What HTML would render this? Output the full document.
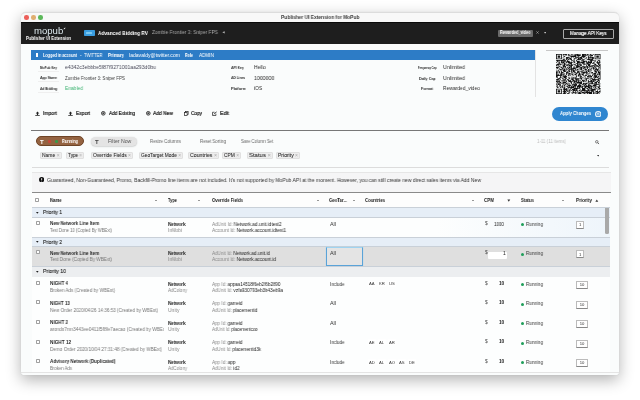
<!DOCTYPE html><html><head><meta charset='utf-8'><style>
*{margin:0;padding:0;box-sizing:border-box}
html,body{width:640px;height:400px;overflow:hidden;background:#fff;font-family:"Liberation Sans",sans-serif;}
.a{position:absolute;white-space:nowrap;line-height:1;will-change:transform}
</style></head><body>
<div class="a" style="left:20.5px;top:12px;width:598.3px;height:362.5px;border-radius:5px 5px 2px 2px;background:#fafcfc;box-shadow:0 5px 15px rgba(0,0,0,0.3),0 0 0.8px rgba(0,0,0,0.25);"></div>
<div class="a" style="left:20.5px;top:12px;width:598.3px;height:10.5px;border-radius:5px 5px 0 0;background:#f8f8f8;border-top:0.6px solid #dcdcdc"></div>
<div class="a" style="left:23.9px;top:15px;width:4.5px;height:4.5px;border-radius:50%;background:#ec5f5a"></div>
<div class="a" style="left:30.6px;top:15px;width:4.5px;height:4.5px;border-radius:50%;background:#dfae70"></div>
<div class="a" style="left:37.9px;top:15px;width:4.5px;height:4.5px;border-radius:50%;background:#5cb85a"></div>
<div class="a" id="t1" style="left:280.75px;top:14.8px;font-size:5px;font-weight:bold;color:#3a3a3a;transform:scaleX(0.9744);transform-origin:0 0;">Publisher UI Extension for MoPub</div>
<div class="a" style="left:20.5px;top:22px;width:598.3px;height:22px;background:#1e1e1e;border-top:0.7px solid #0a0a0a"></div>
<div class="a" id="t2" style="left:33.75px;top:26.5px;font-size:8.5px;color:#dde9ee;;transform:scaleX(1.1250);transform-origin:0 0;">mopub</div>
<svg class="a" style="left:63px;top:26.5px" width="2.6" height="2.6" viewBox="0 0 10 10" preserveAspectRatio="none"><path d="M1 9L9 1L8 8Z" fill="#fff"/></svg>
<div class="a" id="t3" style="left:26px;top:36.6px;font-size:4.8px;font-weight:bold;color:#fff;transform:scaleX(0.8612);transform-origin:0 0;">Publisher UI Extension</div>
<div class="a" style="left:83.85px;top:29.85px;width:11.35px;height:6.25px;background:#3a9de0;border-radius:0.8px"></div>
<div class="a" style="left:86.3px;top:32px;width:6px;height:2.2px;background:#7cc8f0;border-radius:0.5px;filter:blur(0.3px)"></div>
<div class="a" id="t4" style="left:98px;top:30.2px;font-size:6px;font-weight:bold;color:#fff;transform:scaleX(0.7990);transform-origin:0 0;">Advanced Bidding RV</div>
<div class="a" id="t5" style="left:152px;top:30.4px;font-size:5.6px;color:#aaa;transform:scaleX(0.8700);transform-origin:0 0;">Zombie Frontier 3: Sniper FPS</div>
<svg class="a" style="left:222.3px;top:31.2px" width="3" height="2.6" viewBox="0 0 10 10" preserveAspectRatio="none"><path d="M1 5L9 0.5V9.5Z" fill="#bbb"/></svg>
<div class="a" style="left:497.7px;top:29.7px;width:34.6px;height:6.9px;background:#6a6a6a;border-radius:1px"></div>
<div class="a" id="t6" style="left:499.5px;top:31px;font-size:4.8px;font-weight:bold;color:#fff;transform:scaleX(0.8000);transform-origin:0 0;">Rewarded_video</div>
<svg class="a" style="left:536.3px;top:31.2px" width="3" height="3" viewBox="0 0 10 10" preserveAspectRatio="none"><path d="M1 1L9 9M9 1L1 9" stroke="#bbb" stroke-width="1.8"/></svg>
<svg class="a" style="left:544px;top:32.2px" width="2.2" height="1.8" viewBox="0 0 10 8" preserveAspectRatio="none"><path d="M0 0H10L5 8Z" fill="#bbb"/></svg>
<div class="a" style="left:563.2px;top:28.5px;width:50.8px;height:9.8px;border:0.8px solid #aaa;border-radius:1px"></div>
<div class="a" id="t7" style="left:570px;top:30.6px;font-size:5.6px;color:#fff;-webkit-text-stroke:0.15px #fff;transform:scaleX(0.8208);transform-origin:0 0;">Manage API Keys</div>
<div class="a" style="left:31px;top:50px;width:504px;height:10px;background:#2d7cc6"></div>
<div class="a" style="left:35.5px;top:53px;width:2px;height:4px;background:#fff"></div>
<div class="a" id="t8" style="left:43px;top:52.5px;font-size:5px;font-weight:bold;color:#fff;transform:scaleX(0.7649);transform-origin:0 0;">Logged in account</div>
<div class="a" style="left:80px;top:52.5px;font-size:5px;color:#fff">-</div>
<div class="a" id="t9" style="left:83.5px;top:52.5px;font-size:5px;color:#fff;transform:scaleX(0.8326);transform-origin:0 0;">TWITTER</div>
<div class="a" id="t10" style="left:108px;top:52.5px;font-size:5px;font-weight:bold;color:#fff;transform:scaleX(0.8591);transform-origin:0 0;">Primary</div>
<div class="a" id="t11" style="left:128.6px;top:52.5px;font-size:5px;color:#fff;transform:scaleX(1.0178);transform-origin:0 0;">ladavaldy@twitter.com</div>
<div class="a" id="t12" style="left:185px;top:52.5px;font-size:5px;font-weight:bold;color:#fff;transform:scaleX(0.7378);transform-origin:0 0;">Role</div>
<div class="a" id="t13" style="left:199px;top:52.5px;font-size:5px;color:#fff;transform:scaleX(0.9302);transform-origin:0 0;">ADMIN</div>
<div class="a" style="left:535px;top:50px;width:0.8px;height:47px;background:#e3e3e3"></div>
<div class="a" style="left:546px;top:49.5px;width:62px;height:1px;background:#c8c8c8"></div>
<div class="a" id="t14" style="left:40px;top:65.7px;font-size:4px;font-weight:bold;color:#2a2a2a;transform:scaleX(0.7805);transform-origin:0 0;">MoPub Key</div>
<div class="a" style="left:38px;top:70.5px;width:21px;height:0.5px;background:#efefef"></div>
<div class="a" id="t15" style="left:65px;top:64.3px;font-size:6.2px;color:#4a4a5a;transform:scaleX(0.8289);transform-origin:0 0;">e4342c3ebbbe5f87f9271001aa293d0bu</div>
<div class="a" id="t16" style="left:40px;top:76.2px;font-size:4px;font-weight:bold;color:#2a2a2a;transform:scaleX(0.8594);transform-origin:0 0;">App Name</div>
<div class="a" style="left:38px;top:81.0px;width:21px;height:0.5px;background:#efefef"></div>
<div class="a" id="t17" style="left:65px;top:74.8px;font-size:6.2px;color:#3a3a3a;transform:scaleX(0.7151);transform-origin:0 0;">Zombie Frontier 3: Sniper FPS</div>
<div class="a" id="t18" style="left:40px;top:86.7px;font-size:4px;font-weight:bold;color:#2a2a2a;transform:scaleX(0.7971);transform-origin:0 0;">Ad Bidding</div>
<div class="a" style="left:38px;top:91.5px;width:21px;height:0.5px;background:#efefef"></div>
<div class="a" id="t19" style="left:65px;top:85.3px;font-size:6.2px;color:#3cb371;transform:scaleX(0.7923);transform-origin:0 0;">Enabled</div>
<div class="a" id="t20" style="left:230.9px;top:65.7px;font-size:4px;font-weight:bold;color:#2a2a2a;transform:scaleX(0.8397);transform-origin:0 0;">API Key</div>
<div class="a" id="t21" style="left:254.2px;top:64.3px;font-size:6.2px;color:#2a2a2a;transform:scaleX(0.8292);transform-origin:0 0;">Hello</div>
<div class="a" id="t22" style="left:230.9px;top:76.2px;font-size:4px;font-weight:bold;color:#2a2a2a;transform:scaleX(0.8187);transform-origin:0 0;">AD Lines</div>
<div class="a" id="t23" style="left:254.2px;top:74.8px;font-size:6.2px;color:#2a2a2a;transform:scaleX(0.8425);transform-origin:0 0;">1000000</div>
<div class="a" id="t24" style="left:230.9px;top:86.7px;font-size:4px;font-weight:bold;color:#2a2a2a;transform:scaleX(0.9055);transform-origin:0 0;">Platform</div>
<div class="a" id="t25" style="left:254.2px;top:85.3px;font-size:6.2px;color:#2a2a2a;transform:scaleX(0.7746);transform-origin:0 0;">iOS</div>
<div class="a" id="t26" style="left:417.75px;top:66.2px;font-size:4px;font-weight:bold;color:#2a2a2a;transform:scaleX(0.6400);transform-origin:0 0;">Frequency Cap</div>
<div class="a" id="t27" style="left:443px;top:64.3px;font-size:6.2px;color:#2a2a2a;transform:scaleX(0.8528);transform-origin:0 0;">Unlimited</div>
<div class="a" id="t28" style="left:418.75px;top:76.7px;font-size:4px;font-weight:bold;color:#2a2a2a;transform:scaleX(0.9049);transform-origin:0 0;">Daily Cap</div>
<div class="a" id="t29" style="left:443px;top:74.8px;font-size:6.2px;color:#2a2a2a;transform:scaleX(0.8528);transform-origin:0 0;">Unlimited</div>
<div class="a" id="t30" style="left:421.0px;top:87.2px;font-size:4px;font-weight:bold;color:#2a2a2a;transform:scaleX(0.8848);transform-origin:0 0;">Format</div>
<div class="a" id="t31" style="left:443px;top:85.3px;font-size:6.2px;color:#2a2a2a;transform:scaleX(0.7968);transform-origin:0 0;">Rewarded_video</div>
<svg class="a" style="left:555.5px;top:53.5px" width="44.5" height="40" viewBox="0 0 53 53" preserveAspectRatio="none"><path d="M0 0h7v1h-7zM8 0h5v1h-5zM14 0h2v1h-2zM18 0h2v1h-2zM21 0h1v1h-1zM23 0h4v1h-4zM28 0h1v1h-1zM31 0h5v1h-5zM37 0h2v1h-2zM40 0h2v1h-2zM44 0h1v1h-1zM46 0h7v1h-7zM0 1h1v1h-1zM6 1h1v1h-1zM8 1h1v1h-1zM11 1h2v1h-2zM15 1h1v1h-1zM17 1h1v1h-1zM22 1h2v1h-2zM25 1h5v1h-5zM31 1h3v1h-3zM35 1h3v1h-3zM41 1h3v1h-3zM46 1h1v1h-1zM52 1h1v1h-1zM0 2h1v1h-1zM2 2h3v1h-3zM6 2h1v1h-1zM9 2h1v1h-1zM14 2h3v1h-3zM18 2h11v1h-11zM31 2h5v1h-5zM38 2h6v1h-6zM46 2h1v1h-1zM48 2h3v1h-3zM52 2h1v1h-1zM0 3h1v1h-1zM2 3h3v1h-3zM6 3h1v1h-1zM9 3h2v1h-2zM17 3h7v1h-7zM26 3h1v1h-1zM30 3h5v1h-5zM38 3h1v1h-1zM41 3h1v1h-1zM46 3h1v1h-1zM48 3h3v1h-3zM52 3h1v1h-1zM0 4h1v1h-1zM2 4h3v1h-3zM6 4h1v1h-1zM8 4h1v1h-1zM12 4h4v1h-4zM18 4h1v1h-1zM20 4h1v1h-1zM23 4h4v1h-4zM28 4h3v1h-3zM32 4h2v1h-2zM36 4h1v1h-1zM38 4h7v1h-7zM46 4h1v1h-1zM48 4h3v1h-3zM52 4h1v1h-1zM0 5h1v1h-1zM6 5h1v1h-1zM10 5h1v1h-1zM12 5h2v1h-2zM15 5h3v1h-3zM22 5h2v1h-2zM26 5h6v1h-6zM35 5h1v1h-1zM38 5h1v1h-1zM41 5h1v1h-1zM43 5h2v1h-2zM46 5h1v1h-1zM52 5h1v1h-1zM0 6h7v1h-7zM8 6h1v1h-1zM12 6h3v1h-3zM16 6h3v1h-3zM21 6h2v1h-2zM24 6h1v1h-1zM26 6h2v1h-2zM29 6h2v1h-2zM34 6h1v1h-1zM36 6h1v1h-1zM38 6h3v1h-3zM42 6h3v1h-3zM46 6h7v1h-7zM8 7h3v1h-3zM12 7h1v1h-1zM14 7h2v1h-2zM17 7h2v1h-2zM21 7h1v1h-1zM25 7h5v1h-5zM31 7h3v1h-3zM37 7h7v1h-7zM0 8h12v1h-12zM13 8h1v1h-1zM18 8h2v1h-2zM21 8h1v1h-1zM24 8h1v1h-1zM30 8h3v1h-3zM40 8h5v1h-5zM46 8h1v1h-1zM50 8h2v1h-2zM1 9h2v1h-2zM4 9h1v1h-1zM6 9h3v1h-3zM10 9h1v1h-1zM13 9h3v1h-3zM20 9h3v1h-3zM24 9h5v1h-5zM32 9h5v1h-5zM38 9h1v1h-1zM41 9h2v1h-2zM45 9h3v1h-3zM49 9h1v1h-1zM51 9h2v1h-2zM1 10h1v1h-1zM3 10h1v1h-1zM6 10h1v1h-1zM8 10h9v1h-9zM18 10h1v1h-1zM21 10h1v1h-1zM25 10h3v1h-3zM30 10h5v1h-5zM36 10h1v1h-1zM38 10h5v1h-5zM49 10h1v1h-1zM51 10h1v1h-1zM0 11h1v1h-1zM3 11h2v1h-2zM6 11h4v1h-4zM12 11h1v1h-1zM14 11h6v1h-6zM21 11h2v1h-2zM25 11h9v1h-9zM36 11h7v1h-7zM44 11h2v1h-2zM48 11h5v1h-5zM3 12h2v1h-2zM7 12h1v1h-1zM9 12h2v1h-2zM15 12h4v1h-4zM24 12h3v1h-3zM28 12h1v1h-1zM31 12h3v1h-3zM36 12h3v1h-3zM40 12h2v1h-2zM43 12h3v1h-3zM49 12h3v1h-3zM1 13h3v1h-3zM5 13h2v1h-2zM9 13h4v1h-4zM14 13h1v1h-1zM17 13h2v1h-2zM20 13h1v1h-1zM22 13h2v1h-2zM25 13h1v1h-1zM27 13h4v1h-4zM33 13h3v1h-3zM37 13h4v1h-4zM46 13h2v1h-2zM50 13h1v1h-1zM52 13h1v1h-1zM0 14h6v1h-6zM7 14h1v1h-1zM9 14h2v1h-2zM13 14h4v1h-4zM18 14h2v1h-2zM21 14h2v1h-2zM25 14h3v1h-3zM29 14h1v1h-1zM32 14h2v1h-2zM36 14h1v1h-1zM38 14h3v1h-3zM45 14h3v1h-3zM50 14h3v1h-3zM0 15h1v1h-1zM2 15h1v1h-1zM8 15h3v1h-3zM12 15h2v1h-2zM15 15h5v1h-5zM23 15h4v1h-4zM28 15h3v1h-3zM36 15h1v1h-1zM38 15h3v1h-3zM42 15h4v1h-4zM47 15h3v1h-3zM51 15h2v1h-2zM3 16h2v1h-2zM8 16h4v1h-4zM15 16h1v1h-1zM17 16h2v1h-2zM21 16h1v1h-1zM24 16h5v1h-5zM31 16h3v1h-3zM35 16h3v1h-3zM39 16h5v1h-5zM45 16h2v1h-2zM48 16h3v1h-3zM52 16h1v1h-1zM0 17h3v1h-3zM5 17h2v1h-2zM8 17h2v1h-2zM11 17h1v1h-1zM13 17h1v1h-1zM15 17h4v1h-4zM21 17h1v1h-1zM23 17h5v1h-5zM29 17h2v1h-2zM33 17h2v1h-2zM37 17h2v1h-2zM40 17h1v1h-1zM44 17h1v1h-1zM46 17h2v1h-2zM50 17h3v1h-3zM0 18h4v1h-4zM6 18h2v1h-2zM9 18h1v1h-1zM11 18h1v1h-1zM13 18h1v1h-1zM15 18h2v1h-2zM18 18h1v1h-1zM20 18h3v1h-3zM24 18h2v1h-2zM28 18h10v1h-10zM39 18h1v1h-1zM42 18h4v1h-4zM47 18h1v1h-1zM52 18h1v1h-1zM1 19h1v1h-1zM4 19h1v1h-1zM7 19h2v1h-2zM10 19h1v1h-1zM12 19h1v1h-1zM14 19h2v1h-2zM17 19h7v1h-7zM27 19h1v1h-1zM29 19h2v1h-2zM32 19h1v1h-1zM34 19h1v1h-1zM37 19h1v1h-1zM40 19h1v1h-1zM42 19h1v1h-1zM44 19h2v1h-2zM47 19h2v1h-2zM50 19h1v1h-1zM52 19h1v1h-1zM4 20h4v1h-4zM9 20h2v1h-2zM12 20h2v1h-2zM15 20h6v1h-6zM23 20h1v1h-1zM25 20h2v1h-2zM28 20h3v1h-3zM34 20h3v1h-3zM38 20h2v1h-2zM41 20h1v1h-1zM44 20h1v1h-1zM46 20h5v1h-5zM52 20h1v1h-1zM0 21h1v1h-1zM2 21h2v1h-2zM5 21h1v1h-1zM8 21h4v1h-4zM15 21h1v1h-1zM18 21h1v1h-1zM20 21h6v1h-6zM30 21h3v1h-3zM34 21h2v1h-2zM38 21h1v1h-1zM40 21h3v1h-3zM46 21h1v1h-1zM48 21h2v1h-2zM2 22h1v1h-1zM6 22h1v1h-1zM8 22h3v1h-3zM12 22h1v1h-1zM14 22h3v1h-3zM18 22h4v1h-4zM26 22h1v1h-1zM28 22h1v1h-1zM32 22h1v1h-1zM36 22h4v1h-4zM45 22h3v1h-3zM49 22h4v1h-4zM0 23h2v1h-2zM3 23h2v1h-2zM6 23h1v1h-1zM9 23h3v1h-3zM13 23h1v1h-1zM15 23h2v1h-2zM18 23h1v1h-1zM20 23h3v1h-3zM25 23h3v1h-3zM29 23h3v1h-3zM33 23h1v1h-1zM35 23h2v1h-2zM38 23h2v1h-2zM41 23h1v1h-1zM46 23h3v1h-3zM50 23h1v1h-1zM52 23h1v1h-1zM0 24h2v1h-2zM3 24h2v1h-2zM6 24h3v1h-3zM12 24h3v1h-3zM18 24h2v1h-2zM21 24h3v1h-3zM25 24h3v1h-3zM30 24h8v1h-8zM40 24h1v1h-1zM42 24h2v1h-2zM47 24h2v1h-2zM50 24h3v1h-3zM0 25h2v1h-2zM4 25h1v1h-1zM6 25h2v1h-2zM9 25h1v1h-1zM12 25h2v1h-2zM15 25h2v1h-2zM24 25h2v1h-2zM27 25h2v1h-2zM32 25h3v1h-3zM36 25h1v1h-1zM39 25h1v1h-1zM42 25h2v1h-2zM45 25h3v1h-3zM50 25h3v1h-3zM0 26h1v1h-1zM2 26h1v1h-1zM5 26h2v1h-2zM8 26h1v1h-1zM10 26h1v1h-1zM12 26h1v1h-1zM14 26h7v1h-7zM22 26h3v1h-3zM27 26h2v1h-2zM30 26h3v1h-3zM36 26h3v1h-3zM40 26h1v1h-1zM44 26h4v1h-4zM49 26h1v1h-1zM51 26h2v1h-2zM0 27h4v1h-4zM5 27h5v1h-5zM12 27h1v1h-1zM15 27h1v1h-1zM19 27h1v1h-1zM22 27h2v1h-2zM26 27h4v1h-4zM31 27h2v1h-2zM35 27h1v1h-1zM43 27h1v1h-1zM45 27h1v1h-1zM47 27h1v1h-1zM49 27h4v1h-4zM0 28h7v1h-7zM8 28h1v1h-1zM10 28h2v1h-2zM14 28h2v1h-2zM17 28h1v1h-1zM20 28h1v1h-1zM24 28h1v1h-1zM26 28h2v1h-2zM29 28h1v1h-1zM32 28h1v1h-1zM34 28h3v1h-3zM38 28h4v1h-4zM43 28h1v1h-1zM45 28h4v1h-4zM52 28h1v1h-1zM0 29h2v1h-2zM5 29h1v1h-1zM8 29h5v1h-5zM24 29h1v1h-1zM26 29h1v1h-1zM28 29h3v1h-3zM34 29h1v1h-1zM37 29h6v1h-6zM45 29h4v1h-4zM50 29h1v1h-1zM52 29h1v1h-1zM0 30h2v1h-2zM5 30h3v1h-3zM9 30h4v1h-4zM14 30h1v1h-1zM16 30h1v1h-1zM18 30h2v1h-2zM21 30h1v1h-1zM23 30h2v1h-2zM29 30h1v1h-1zM32 30h1v1h-1zM34 30h1v1h-1zM37 30h2v1h-2zM41 30h2v1h-2zM44 30h1v1h-1zM46 30h5v1h-5zM52 30h1v1h-1zM1 31h1v1h-1zM4 31h2v1h-2zM9 31h3v1h-3zM15 31h1v1h-1zM20 31h2v1h-2zM23 31h1v1h-1zM28 31h4v1h-4zM35 31h1v1h-1zM39 31h2v1h-2zM45 31h3v1h-3zM49 31h1v1h-1zM52 31h1v1h-1zM2 32h3v1h-3zM7 32h2v1h-2zM11 32h2v1h-2zM15 32h2v1h-2zM18 32h3v1h-3zM22 32h6v1h-6zM29 32h2v1h-2zM33 32h1v1h-1zM35 32h4v1h-4zM41 32h3v1h-3zM45 32h1v1h-1zM50 32h3v1h-3zM0 33h4v1h-4zM5 33h1v1h-1zM8 33h1v1h-1zM10 33h2v1h-2zM13 33h2v1h-2zM18 33h3v1h-3zM23 33h4v1h-4zM30 33h1v1h-1zM35 33h2v1h-2zM40 33h1v1h-1zM43 33h8v1h-8zM52 33h1v1h-1zM1 34h2v1h-2zM4 34h1v1h-1zM8 34h3v1h-3zM14 34h2v1h-2zM17 34h1v1h-1zM19 34h3v1h-3zM23 34h2v1h-2zM26 34h4v1h-4zM31 34h4v1h-4zM36 34h1v1h-1zM38 34h1v1h-1zM41 34h6v1h-6zM50 34h2v1h-2zM0 35h1v1h-1zM2 35h1v1h-1zM4 35h1v1h-1zM6 35h3v1h-3zM10 35h3v1h-3zM14 35h4v1h-4zM20 35h3v1h-3zM24 35h3v1h-3zM31 35h2v1h-2zM34 35h1v1h-1zM36 35h1v1h-1zM38 35h1v1h-1zM41 35h2v1h-2zM44 35h1v1h-1zM46 35h2v1h-2zM49 35h3v1h-3zM0 36h5v1h-5zM8 36h1v1h-1zM10 36h1v1h-1zM12 36h1v1h-1zM15 36h5v1h-5zM21 36h4v1h-4zM26 36h2v1h-2zM29 36h2v1h-2zM32 36h2v1h-2zM35 36h1v1h-1zM38 36h8v1h-8zM48 36h2v1h-2zM51 36h1v1h-1zM1 37h2v1h-2zM4 37h2v1h-2zM8 37h4v1h-4zM17 37h2v1h-2zM21 37h2v1h-2zM24 37h7v1h-7zM38 37h1v1h-1zM40 37h1v1h-1zM42 37h2v1h-2zM46 37h3v1h-3zM50 37h2v1h-2zM0 38h1v1h-1zM3 38h13v1h-13zM18 38h1v1h-1zM20 38h1v1h-1zM22 38h2v1h-2zM25 38h6v1h-6zM32 38h2v1h-2zM35 38h4v1h-4zM40 38h1v1h-1zM42 38h2v1h-2zM45 38h4v1h-4zM50 38h2v1h-2zM1 39h3v1h-3zM8 39h1v1h-1zM12 39h1v1h-1zM16 39h1v1h-1zM18 39h1v1h-1zM21 39h1v1h-1zM23 39h2v1h-2zM28 39h3v1h-3zM32 39h5v1h-5zM39 39h6v1h-6zM46 39h1v1h-1zM48 39h1v1h-1zM52 39h1v1h-1zM0 40h1v1h-1zM2 40h4v1h-4zM8 40h1v1h-1zM10 40h2v1h-2zM13 40h2v1h-2zM16 40h1v1h-1zM19 40h6v1h-6zM27 40h2v1h-2zM31 40h2v1h-2zM34 40h2v1h-2zM38 40h2v1h-2zM45 40h7v1h-7zM1 41h1v1h-1zM4 41h2v1h-2zM7 41h1v1h-1zM9 41h2v1h-2zM14 41h4v1h-4zM19 41h1v1h-1zM21 41h4v1h-4zM26 41h4v1h-4zM33 41h2v1h-2zM36 41h1v1h-1zM38 41h4v1h-4zM44 41h4v1h-4zM51 41h1v1h-1zM0 42h2v1h-2zM4 42h1v1h-1zM7 42h1v1h-1zM10 42h1v1h-1zM12 42h2v1h-2zM15 42h2v1h-2zM18 42h1v1h-1zM20 42h4v1h-4zM25 42h8v1h-8zM34 42h6v1h-6zM41 42h8v1h-8zM51 42h2v1h-2zM1 43h1v1h-1zM3 43h1v1h-1zM5 43h4v1h-4zM10 43h1v1h-1zM13 43h2v1h-2zM16 43h1v1h-1zM18 43h4v1h-4zM23 43h1v1h-1zM25 43h5v1h-5zM31 43h1v1h-1zM33 43h10v1h-10zM46 43h1v1h-1zM49 43h3v1h-3zM1 44h2v1h-2zM5 44h1v1h-1zM7 44h1v1h-1zM9 44h2v1h-2zM14 44h8v1h-8zM23 44h1v1h-1zM25 44h1v1h-1zM27 44h2v1h-2zM30 44h2v1h-2zM34 44h2v1h-2zM38 44h3v1h-3zM42 44h1v1h-1zM44 44h1v1h-1zM46 44h2v1h-2zM50 44h2v1h-2zM9 45h2v1h-2zM12 45h1v1h-1zM14 45h1v1h-1zM17 45h2v1h-2zM21 45h8v1h-8zM31 45h4v1h-4zM36 45h2v1h-2zM39 45h4v1h-4zM46 45h1v1h-1zM48 45h1v1h-1zM51 45h2v1h-2zM0 46h7v1h-7zM8 46h6v1h-6zM16 46h1v1h-1zM19 46h7v1h-7zM31 46h4v1h-4zM37 46h2v1h-2zM42 46h6v1h-6zM49 46h4v1h-4zM0 47h1v1h-1zM6 47h1v1h-1zM9 47h4v1h-4zM14 47h1v1h-1zM16 47h2v1h-2zM19 47h4v1h-4zM24 47h1v1h-1zM28 47h2v1h-2zM31 47h4v1h-4zM38 47h9v1h-9zM0 48h1v1h-1zM2 48h3v1h-3zM6 48h1v1h-1zM9 48h2v1h-2zM12 48h2v1h-2zM15 48h2v1h-2zM18 48h1v1h-1zM20 48h6v1h-6zM27 48h2v1h-2zM30 48h10v1h-10zM41 48h4v1h-4zM46 48h1v1h-1zM49 48h1v1h-1zM52 48h1v1h-1zM0 49h1v1h-1zM2 49h3v1h-3zM6 49h1v1h-1zM8 49h4v1h-4zM13 49h2v1h-2zM16 49h1v1h-1zM20 49h1v1h-1zM23 49h1v1h-1zM25 49h1v1h-1zM29 49h2v1h-2zM34 49h1v1h-1zM36 49h2v1h-2zM39 49h1v1h-1zM42 49h3v1h-3zM47 49h3v1h-3zM51 49h2v1h-2zM0 50h1v1h-1zM2 50h3v1h-3zM6 50h1v1h-1zM9 50h4v1h-4zM15 50h2v1h-2zM19 50h3v1h-3zM23 50h1v1h-1zM26 50h3v1h-3zM31 50h12v1h-12zM44 50h2v1h-2zM47 50h6v1h-6zM0 51h1v1h-1zM6 51h1v1h-1zM9 51h2v1h-2zM15 51h1v1h-1zM18 51h1v1h-1zM20 51h6v1h-6zM27 51h7v1h-7zM35 51h8v1h-8zM44 51h1v1h-1zM46 51h1v1h-1zM49 51h2v1h-2zM0 52h7v1h-7zM8 52h4v1h-4zM13 52h3v1h-3zM19 52h1v1h-1zM23 52h1v1h-1zM26 52h4v1h-4zM33 52h2v1h-2zM37 52h1v1h-1zM39 52h4v1h-4zM44 52h2v1h-2zM47 52h3v1h-3zM51 52h1v1h-1z" fill="#111"/></svg>
<div class="a" style="left:552px;top:107px;width:56px;height:13.5px;background:#2f86d0;border-radius:7px"></div>
<div class="a" id="t32" style="left:560px;top:111px;font-size:5.4px;font-weight:bold;color:#fff;transform:scaleX(0.7898);transform-origin:0 0;">Apply Changes</div>
<svg class="a" style="left:595.3px;top:110.6px" width="6.4" height="6.4" viewBox="0 0 10 10" preserveAspectRatio="none"><circle cx="5" cy="5" r="5" fill="#e8f2fa"/><rect x="2.6" y="2.8" width="4.8" height="4.4" rx="0.6" fill="none" stroke="#2f86d0" stroke-width="1.2"/><path d="M3.8 5L4.8 6L6.4 4" fill="none" stroke="#2f86d0" stroke-width="1"/></svg>
<svg class="a" style="left:34.75px;top:110.8px" width="5" height="5" viewBox="0 0 10 10" preserveAspectRatio="none"><path d="M5 1 L8.5 4.8 H6.2 V8 H3.8 V4.8 H1.5 Z M0.5 8.6 H9.5 V10 H0.5 Z" fill="#222"/></svg>
<svg class="a" style="left:68px;top:110.8px" width="5" height="5" viewBox="0 0 10 10" preserveAspectRatio="none"><path d="M5 1 L8.5 4.8 H6.2 V8 H3.8 V4.8 H1.5 Z M0.5 8.6 H9.5 V10 H0.5 Z" fill="#222"/></svg>
<svg class="a" style="left:101px;top:110.9px" width="4.6" height="4.6" viewBox="0 0 10 10" preserveAspectRatio="none"><circle cx="5" cy="5" r="4" fill="none" stroke="#111" stroke-width="1.7"/><path d="M5 2.6V7.4M2.6 5H7.4" stroke="#111" stroke-width="1.5"/></svg>
<svg class="a" style="left:146.3px;top:110.9px" width="4.6" height="4.6" viewBox="0 0 10 10" preserveAspectRatio="none"><circle cx="5" cy="5" r="4" fill="none" stroke="#111" stroke-width="1.7"/><path d="M5 2.6V7.4M2.6 5H7.4" stroke="#111" stroke-width="1.5"/></svg>
<svg class="a" style="left:184px;top:110.8px" width="4.6" height="4.8" viewBox="0 0 10 10" preserveAspectRatio="none"><rect x="3.2" y="0.8" width="5.8" height="6.4" fill="#fff" stroke="#222" stroke-width="1.5"/><rect x="1" y="3" width="5.8" height="6.4" fill="#fff" stroke="#222" stroke-width="1.5"/></svg>
<svg class="a" style="left:212.2px;top:110.6px" width="5.2" height="5" viewBox="0 0 10 10" preserveAspectRatio="none"><path d="M1 2.5H5M1 2.5V9H7.5V5.5" fill="none" stroke="#222" stroke-width="1.4"/><path d="M4 6.5L9 1.2" stroke="#222" stroke-width="1.8"/></svg>
<div class="a" id="t33" style="left:43px;top:110.6px;font-size:5.6px;color:#1a1a1a;-webkit-text-stroke:0.2px #1a1a1a;transform:scaleX(0.8828);transform-origin:0 0;">Import</div>
<div class="a" id="t34" style="left:75.75px;top:110.6px;font-size:5.6px;color:#1a1a1a;-webkit-text-stroke:0.2px #1a1a1a;transform:scaleX(0.8812);transform-origin:0 0;">Export</div>
<div class="a" id="t35" style="left:109px;top:110.6px;font-size:5.6px;color:#1a1a1a;-webkit-text-stroke:0.2px #1a1a1a;transform:scaleX(0.8362);transform-origin:0 0;">Add Existing</div>
<div class="a" id="t36" style="left:153.4px;top:110.6px;font-size:5.6px;color:#1a1a1a;-webkit-text-stroke:0.2px #1a1a1a;transform:scaleX(0.8765);transform-origin:0 0;">Add New</div>
<div class="a" id="t37" style="left:191px;top:110.6px;font-size:5.6px;color:#1a1a1a;-webkit-text-stroke:0.2px #1a1a1a;transform:scaleX(0.8421);transform-origin:0 0;">Copy</div>
<div class="a" id="t38" style="left:220px;top:110.6px;font-size:5.6px;color:#1a1a1a;-webkit-text-stroke:0.2px #1a1a1a;transform:scaleX(0.9335);transform-origin:0 0;">Edit</div>
<div class="a" style="left:31px;top:130px;width:577.5px;height:1px;background:#777"></div>
<div class="a" style="left:36.3px;top:136.4px;width:47.8px;height:9.8px;background:#946341;border:0.7px solid #6e4426;border-radius:5px"></div>
<div class="a" style="left:40px;top:138.5px;font-size:6px;font-weight:bold;color:#fff">T</div>
<div class="a" style="left:47.6px;top:139.8px;width:2.6px;height:2.6px;background:#c8473a;border-radius:50%"></div>
<div class="a" style="left:55.3px;top:139.8px;width:2.6px;height:2.6px;background:#3a9a4a;border-radius:50%"></div>
<div class="a" id="t39" style="left:62px;top:139.2px;font-size:5.2px;font-weight:bold;color:#fff;transform:scaleX(0.7608);transform-origin:0 0;">Running</div>
<div class="a" style="left:91.2px;top:136.7px;width:46.3px;height:9px;background:#e4e4e4;border-radius:5px;box-shadow:0 0.5px 1.5px rgba(0,0,0,0.25)"></div>
<div class="a" style="left:94.5px;top:138.5px;font-size:6px;font-weight:bold;color:#444">T</div>
<div class="a" id="t40" style="left:108px;top:139.2px;font-size:5.2px;color:#555;transform:scaleX(0.9846);transform-origin:0 0;">Filter Now</div>
<div class="a" id="t41" style="left:150px;top:140.4px;font-size:4.8px;color:#666;transform:scaleX(0.8873);transform-origin:0 0;">Resize Columns</div>
<div class="a" id="t42" style="left:200px;top:140.4px;font-size:4.8px;color:#666;transform:scaleX(0.8946);transform-origin:0 0;">Reset Sorting</div>
<div class="a" id="t43" style="left:241px;top:140.4px;font-size:4.8px;color:#666;transform:scaleX(0.8573);transform-origin:0 0;">Save Column Set</div>
<div class="a" id="t44" style="left:537px;top:140.4px;font-size:4.8px;color:#bbb;transform:scaleX(0.9193);transform-origin:0 0;">1-11 (11 items)</div>
<svg class="a" style="left:595px;top:139.5px" width="4.5" height="4.5" viewBox="0 0 10 10" preserveAspectRatio="none"><circle cx="4" cy="4" r="2.8" fill="none" stroke="#444" stroke-width="1.5"/><path d="M6 6L9 9" stroke="#444" stroke-width="1.8"/></svg>
<svg class="a" style="left:596.5px;top:154.6px" width="2.4" height="1.6" viewBox="0 0 10 8" preserveAspectRatio="none"><path d="M0 0H10L5 8Z" fill="#333"/></svg>
<div class="a" style="left:40px;top:152.2px;width:21.6px;height:7px;background:#ededed;border:0.5px solid #e0e0e0;border-radius:1px"></div>
<div class="a" id="t45" style="left:42px;top:154px;font-size:4.8px;color:#2a2a2a;-webkit-text-stroke:0.06px #2a2a2a;transform:scaleX(1.0382);transform-origin:0 0;">Name <span style='color:#aaa;-webkit-text-stroke:0'>×</span></div>
<div class="a" style="left:66px;top:152.2px;width:18px;height:7px;background:#ededed;border:0.5px solid #e0e0e0;border-radius:1px"></div>
<div class="a" id="t46" style="left:68px;top:154px;font-size:4.8px;color:#2a2a2a;-webkit-text-stroke:0.06px #2a2a2a;transform:scaleX(0.9624);transform-origin:0 0;">Type <span style='color:#aaa;-webkit-text-stroke:0'>×</span></div>
<div class="a" style="left:91px;top:152.2px;width:42px;height:7px;background:#ededed;border:0.5px solid #e0e0e0;border-radius:1px"></div>
<div class="a" id="t47" style="left:93px;top:154px;font-size:4.8px;color:#2a2a2a;-webkit-text-stroke:0.06px #2a2a2a;transform:scaleX(1.0362);transform-origin:0 0;">Override Fields <span style='color:#aaa;-webkit-text-stroke:0'>×</span></div>
<div class="a" style="left:139px;top:152.2px;width:44px;height:7px;background:#ededed;border:0.5px solid #e0e0e0;border-radius:1px"></div>
<div class="a" id="t48" style="left:141px;top:154px;font-size:4.8px;color:#2a2a2a;-webkit-text-stroke:0.06px #2a2a2a;transform:scaleX(1.0027);transform-origin:0 0;">GeoTarget Mode <span style='color:#aaa;-webkit-text-stroke:0'>×</span></div>
<div class="a" style="left:188px;top:152.2px;width:31px;height:7px;background:#ededed;border:0.5px solid #e0e0e0;border-radius:1px"></div>
<div class="a" id="t49" style="left:190px;top:154px;font-size:4.8px;color:#2a2a2a;-webkit-text-stroke:0.06px #2a2a2a;transform:scaleX(1.0937);transform-origin:0 0;">Countries <span style='color:#aaa;-webkit-text-stroke:0'>×</span></div>
<div class="a" style="left:222px;top:152.2px;width:19px;height:7px;background:#ededed;border:0.5px solid #e0e0e0;border-radius:1px"></div>
<div class="a" id="t50" style="left:224px;top:154px;font-size:4.8px;color:#2a2a2a;-webkit-text-stroke:0.06px #2a2a2a;transform:scaleX(1.0127);transform-origin:0 0;">CPM <span style='color:#aaa;-webkit-text-stroke:0'>×</span></div>
<div class="a" style="left:247px;top:152.2px;width:26px;height:7px;background:#ededed;border:0.5px solid #e0e0e0;border-radius:1px"></div>
<div class="a" id="t51" style="left:249px;top:154px;font-size:4.8px;color:#2a2a2a;-webkit-text-stroke:0.06px #2a2a2a;transform:scaleX(1.2394);transform-origin:0 0;">Status <span style='color:#aaa;-webkit-text-stroke:0'>×</span></div>
<div class="a" style="left:276px;top:152.2px;width:24px;height:7px;background:#ededed;border:0.5px solid #e0e0e0;border-radius:1px"></div>
<div class="a" id="t52" style="left:278px;top:154px;font-size:4.8px;color:#2a2a2a;-webkit-text-stroke:0.06px #2a2a2a;transform:scaleX(1.0483);transform-origin:0 0;">Priority <span style='color:#aaa;-webkit-text-stroke:0'>×</span></div>
<div class="a" style="left:31.5px;top:167px;width:577px;height:0.8px;background:#dcdcdc"></div>
<div class="a" style="left:31.5px;top:172px;width:578.5px;height:20px;background:#f5f5f6;border-top:0.6px solid #e6e6e6"></div>
<svg class="a" style="left:38.8px;top:177.3px" width="5.3" height="5.3" viewBox="0 0 10 10" preserveAspectRatio="none"><circle cx="5" cy="5" r="5" fill="#111"/><path d="M5 2.2V5.8" stroke="#fff" stroke-width="1.6"/><circle cx="5" cy="7.6" r="0.9" fill="#fff"/></svg>
<div class="a" id="t53" style="left:47px;top:178px;font-size:5.2px;color:#333;transform:scaleX(0.9683);transform-origin:0 0;">Guaranteed, Non-Guaranteed, Promo, Backfill-Promo line items are not included. It's not supported by MoPub API at the moment. However, you can still create new direct sales items via Add New</div>
<div class="a" style="left:0;top:0;width:640px;height:400px;clip-path:inset(12px 21.2px 27.5px 20.5px round 5px 5px 1px 1px)">
<div class="a" style="left:31.5px;top:192px;width:577.5px;height:15.5px;background:#fdfdfd"></div>
<div class="a" style="left:31.5px;top:191.6px;width:578.5px;height:1px;background:#8a8a8a"></div>
<div class="a" style="left:31.5px;top:207px;width:577.5px;height:0.8px;background:#c6ced8"></div>
<div class="a" style="left:35px;top:197.9px;width:4.4px;height:4.2px;border:0.6px solid #a0a0a0;border-radius:0.7px;background:#fff"></div>
<div class="a" id="t54" style="left:49.5px;top:198.2px;font-size:5.2px;font-weight:bold;color:#222;transform:scaleX(0.8133);transform-origin:0 0;">Name</div>
<div class="a" style="left:154.5px;top:200.3px;width:2.4px;height:0.5px;background:#999"></div>
<div class="a" id="t55" style="left:168px;top:198.2px;font-size:5.2px;font-weight:bold;color:#222;transform:scaleX(0.7670);transform-origin:0 0;">Type</div>
<div class="a" style="left:197.8px;top:200.3px;width:2.4px;height:0.5px;background:#999"></div>
<div class="a" id="t56" style="left:212px;top:198.2px;font-size:5.2px;font-weight:bold;color:#222;transform:scaleX(0.8205);transform-origin:0 0;">Override Fields</div>
<div class="a" style="left:316.8px;top:200.3px;width:2.4px;height:0.5px;background:#999"></div>
<div class="a" id="t57" style="left:329px;top:198.2px;font-size:5.2px;font-weight:bold;color:#222;transform:scaleX(0.8252);transform-origin:0 0;">GeoTar...</div>
<div class="a" style="left:352.8px;top:200.3px;width:2.4px;height:0.5px;background:#999"></div>
<div class="a" id="t58" style="left:364.7px;top:198.2px;font-size:5.2px;font-weight:bold;color:#222;transform:scaleX(0.8258);transform-origin:0 0;">Countries</div>
<div class="a" style="left:471.8px;top:200.3px;width:2.4px;height:0.5px;background:#999"></div>
<div class="a" id="t59" style="left:483.7px;top:198.2px;font-size:5.2px;font-weight:bold;color:#222;transform:scaleX(0.8672);transform-origin:0 0;">CPM</div>
<svg class="a" style="left:507.2px;top:198.6px" width="3.6" height="3" viewBox="0 0 10 8" preserveAspectRatio="none"><path d="M1 1H9L5 7Z" fill="#333"/></svg>
<div class="a" id="t60" style="left:520.5px;top:198.2px;font-size:5.2px;font-weight:bold;color:#222;transform:scaleX(0.8197);transform-origin:0 0;">Status</div>
<div class="a" style="left:562.3px;top:200.3px;width:2.4px;height:0.5px;background:#999"></div>
<div class="a" id="t61" style="left:575.5px;top:198.2px;font-size:5.2px;font-weight:bold;color:#222;transform:scaleX(0.8805);transform-origin:0 0;">Priority</div>
<svg class="a" style="left:594.7px;top:198.6px" width="3.6" height="3" viewBox="0 0 10 8" preserveAspectRatio="none"><path d="M1 7H9L5 1Z" fill="#333"/></svg>
<div class="a" style="left:31.5px;top:207.5px;width:577.5px;height:10.0px;background:#e6eef7"></div>
<div class="a" style="left:31.5px;top:216.8px;width:577.5px;height:0.7px;background:#c9d0d8"></div>
<div class="a" style="left:31.5px;top:207.2px;width:577.5px;height:0.7px;background:#c9d0d8"></div>
<svg class="a" style="left:35.6px;top:211.7px" width="2.6" height="1.8" viewBox="0 0 10 8" preserveAspectRatio="none"><path d="M0 0H10L5 8Z" fill="#222"/></svg>
<div class="a" id="t62" style="left:43px;top:210.3px;font-size:5.4px;color:#222;-webkit-text-stroke:0.1px #222;transform:scaleX(0.8928);transform-origin:0 0;">Priority 1</div>
<div class="a" style="left:31.5px;top:217.5px;width:577.5px;height:19.5px;background:linear-gradient(to right,#fdfefe 70%,#eef5fb)"></div>
<div class="a" style="left:36.3px;top:221.0px;width:4.1px;height:4.1px;border:0.6px solid #a0a0a0;border-radius:0.7px;background:#fff"></div>
<div class="a" id="t63" style="left:49.6px;top:222.20000000000002px;font-size:4.7px;font-weight:bold;color:#2a2a2a;transform:scaleX(0.9546);transform-origin:0 0;">New Network Line Item</div>
<div class="a" style="left:49.6px;top:228.10000000000002px;width:114px;height:7px;overflow:hidden">
<div class="a" id="t64" style="left:0px;top:0px;font-size:5px;color:#777;transform:scaleX(0.8387);transform-origin:0 0;">Test Done 10 (Copied By WBExt)</div>
</div>
<div class="a" id="t65" style="left:168px;top:221.8px;font-size:5px;font-weight:bold;color:#222;transform:scaleX(0.8868);transform-origin:0 0;">Network</div>
<div class="a" id="t66" style="left:168px;top:228.10000000000002px;font-size:5px;color:#888;transform:scaleX(0.9324);transform-origin:0 0;">InMobi</div>
<div class="a" id="t67" style="left:211.8px;top:221.8px;font-size:5px;color:#222;transform:scaleX(0.9364);transform-origin:0 0;"><span style='color:#888'>AdUnit Id:</span> Network.ad.unit.idtest2</div>
<div class="a" id="t68" style="left:211.8px;top:228.10000000000002px;font-size:5px;color:#222;transform:scaleX(0.9277);transform-origin:0 0;"><span style='color:#888'>Account Id:</span> Network.account.idtest1</div>
<div class="a" id="t69" style="left:329.5px;top:221.8px;font-size:5px;color:#333;transform:scaleX(1.0787);transform-origin:0 0;">All</div>
<div class="a" style="left:484.5px;top:221.8px;font-size:4.8px;color:#444">$</div>
<div class="a" id="t70" style="left:494px;top:221.8px;font-size:5px;color:#222;transform:scaleX(0.8989);transform-origin:0 0;">1000</div>
<div class="a" style="left:520.6px;top:223.20000000000002px;width:3.1px;height:3.1px;background:#1f9e5a;border-radius:50%"></div>
<div class="a" id="t71" style="left:525.5px;top:221.8px;font-size:5.2px;color:#333;transform:scaleX(0.8795);transform-origin:0 0;">Running</div>
<div class="a" style="left:575.7px;top:221.10000000000002px;width:8.3px;height:7.8px;border:0.6px solid #bbb;border-bottom-color:#888;background:#fff;border-radius:0.6px"></div>
<div class="a" style="left:575.7px;top:223.20000000000002px;width:8.3px;text-align:center;font-size:4.2px;color:#333">1</div>
<div class="a" style="left:31.5px;top:237px;width:577.5px;height:9.800000000000011px;background:#e6eef7"></div>
<div class="a" style="left:31.5px;top:246.10000000000002px;width:577.5px;height:0.7px;background:#c9d0d8"></div>
<div class="a" style="left:31.5px;top:236.7px;width:577.5px;height:0.7px;background:#c9d0d8"></div>
<svg class="a" style="left:35.6px;top:241.2px" width="2.6" height="1.8" viewBox="0 0 10 8" preserveAspectRatio="none"><path d="M0 0H10L5 8Z" fill="#222"/></svg>
<div class="a" id="t72" style="left:43px;top:239.8px;font-size:5.4px;color:#222;-webkit-text-stroke:0.1px #222;transform:scaleX(0.8928);transform-origin:0 0;">Priority 2</div>
<div class="a" style="left:31.5px;top:246.8px;width:577.5px;height:19.69999999999999px;background:#dfdfdf"></div>
<div class="a" style="left:36.3px;top:250.3px;width:4.1px;height:4.1px;border:0.6px solid #a0a0a0;border-radius:0.7px;background:#fff"></div>
<div class="a" id="t73" style="left:49.6px;top:251.50000000000003px;font-size:4.7px;font-weight:bold;color:#2a2a2a;transform:scaleX(0.9546);transform-origin:0 0;">New Network Line Item</div>
<div class="a" style="left:49.6px;top:257.40000000000003px;width:114px;height:7px;overflow:hidden">
<div class="a" id="t74" style="left:0px;top:0px;font-size:5px;color:#777;transform:scaleX(0.9258);transform-origin:0 0;">Test Done (Copied By WBExt)</div>
</div>
<div class="a" id="t75" style="left:168px;top:251.10000000000002px;font-size:5px;font-weight:bold;color:#222;transform:scaleX(0.8868);transform-origin:0 0;">Network</div>
<div class="a" id="t76" style="left:168px;top:257.40000000000003px;font-size:5px;color:#888;transform:scaleX(0.9324);transform-origin:0 0;">InMobi</div>
<div class="a" id="t77" style="left:211.8px;top:251.10000000000002px;font-size:5px;color:#222;transform:scaleX(0.9150);transform-origin:0 0;"><span style='color:#888'>AdUnit Id:</span> Network.ad.unit.id</div>
<div class="a" id="t78" style="left:211.8px;top:257.40000000000003px;font-size:5px;color:#222;transform:scaleX(0.9284);transform-origin:0 0;"><span style='color:#888'>Account Id:</span> Network.account.id</div>
<div class="a" style="left:325.5px;top:247.0px;width:37px;height:19.29999999999999px;background:#e4e4e4;border:0.7px solid #5aa3d8;border-top-color:#9fd3f0;box-shadow:0 0 1px #9fd0ee"></div>
<div class="a" id="t79" style="left:329.5px;top:251.10000000000002px;font-size:5px;color:#333;transform:scaleX(1.0787);transform-origin:0 0;">All</div>
<div class="a" style="left:484.5px;top:251.10000000000002px;font-size:4.8px;color:#444">$</div>
<div class="a" style="left:487.5px;top:251.8px;width:18.5px;height:6.5px;background:#fff;border-radius:1px"></div>
<div class="a" style="left:502.5px;top:251.10000000000002px;font-size:5px;color:#222">1</div>
<div class="a" style="left:520.6px;top:252.50000000000003px;width:3.1px;height:3.1px;background:#1f9e5a;border-radius:50%"></div>
<div class="a" id="t80" style="left:525.5px;top:251.10000000000002px;font-size:5.2px;color:#333;transform:scaleX(0.8795);transform-origin:0 0;">Running</div>
<div class="a" style="left:575.7px;top:250.40000000000003px;width:8.3px;height:7.8px;border:0.6px solid #bbb;border-bottom-color:#888;background:#fff;border-radius:0.6px"></div>
<div class="a" style="left:575.7px;top:252.50000000000003px;width:8.3px;text-align:center;font-size:4.2px;color:#333">1</div>
<div class="a" style="left:31.5px;top:266.5px;width:577.5px;height:10.800000000000011px;background:#eceef0"></div>
<div class="a" style="left:31.5px;top:276.6px;width:577.5px;height:0.7px;background:#c9d0d8"></div>
<div class="a" style="left:31.5px;top:266.2px;width:577.5px;height:0.7px;background:#c9d0d8"></div>
<svg class="a" style="left:35.6px;top:270.7px" width="2.6" height="1.8" viewBox="0 0 10 8" preserveAspectRatio="none"><path d="M0 0H10L5 8Z" fill="#222"/></svg>
<div class="a" id="t81" style="left:43px;top:269.3px;font-size:5.4px;color:#222;-webkit-text-stroke:0.1px #222;transform:scaleX(0.9472);transform-origin:0 0;">Priority 10</div>
<div class="a" style="left:31.5px;top:277.3px;width:577.5px;height:19.600000000000023px;background:#fdfefe"></div>
<div class="a" style="left:36.3px;top:280.8px;width:4.1px;height:4.1px;border:0.6px solid #a0a0a0;border-radius:0.7px;background:#fff"></div>
<div class="a" id="t82" style="left:49.6px;top:282.0px;font-size:4.7px;font-weight:bold;color:#2a2a2a;transform:scaleX(0.9730);transform-origin:0 0;">NIGHT 4</div>
<div class="a" style="left:49.6px;top:287.90000000000003px;width:114px;height:7px;overflow:hidden">
<div class="a" id="t83" style="left:0px;top:0px;font-size:5px;color:#777;transform:scaleX(0.9101);transform-origin:0 0;">Broken Ads (Created by WBExt)</div>
</div>
<div class="a" id="t84" style="left:168px;top:281.6px;font-size:5px;font-weight:bold;color:#222;transform:scaleX(0.8868);transform-origin:0 0;">Network</div>
<div class="a" id="t85" style="left:168px;top:287.90000000000003px;font-size:5px;color:#888;transform:scaleX(0.8761);transform-origin:0 0;">AdColony</div>
<div class="a" id="t86" style="left:211.8px;top:281.6px;font-size:5px;color:#222;transform:scaleX(0.9054);transform-origin:0 0;"><span style='color:#888'>App Id:</span> appaa14518f6eb2f6b2890</div>
<div class="a" id="t87" style="left:211.8px;top:287.90000000000003px;font-size:5px;color:#222;transform:scaleX(0.9217);transform-origin:0 0;"><span style='color:#888'>AdUnit Id:</span> vzfa930793eb3b43eb9a</div>
<div class="a" id="t88" style="left:329.5px;top:281.6px;font-size:5px;color:#333;transform:scaleX(0.8992);transform-origin:0 0;">Include</div>
<div class="a" style="left:367.5px;top:280.6px;width:8px;height:6.2px;background:#fff;border-radius:0.5px"></div>
<div class="a" style="left:368.8px;top:282.1px;font-size:4.2px;color:#333">AA</div>
<div class="a" style="left:377.5px;top:280.6px;width:8px;height:6.2px;background:#fff;border-radius:0.5px"></div>
<div class="a" style="left:378.8px;top:282.1px;font-size:4.2px;color:#333">KR</div>
<div class="a" style="left:387.5px;top:280.6px;width:8px;height:6.2px;background:#fff;border-radius:0.5px"></div>
<div class="a" style="left:388.8px;top:282.1px;font-size:4.2px;color:#333">US</div>
<div class="a" style="left:484.5px;top:281.6px;font-size:4.8px;color:#444">$</div>
<div class="a" style="left:499.3px;top:281.6px;font-size:4.8px;font-weight:bold;color:#222;letter-spacing:-0.2px">10</div>
<div class="a" style="left:520.6px;top:283.0px;width:3.1px;height:3.1px;background:#1f9e5a;border-radius:50%"></div>
<div class="a" id="t89" style="left:525.5px;top:281.6px;font-size:5.2px;color:#333;transform:scaleX(0.8795);transform-origin:0 0;">Running</div>
<div class="a" style="left:575.7px;top:280.90000000000003px;width:12px;height:7.8px;border:0.6px solid #bbb;border-bottom-color:#888;background:#fff;border-radius:0.6px"></div>
<div class="a" style="left:575.7px;top:283.0px;width:12px;text-align:center;font-size:4.2px;color:#333">10</div>
<div class="a" style="left:31.5px;top:296.90000000000003px;width:577.5px;height:19.600000000000023px;background:#fdfefe"></div>
<div class="a" style="left:36.3px;top:300.40000000000003px;width:4.1px;height:4.1px;border:0.6px solid #a0a0a0;border-radius:0.7px;background:#fff"></div>
<div class="a" id="t90" style="left:49.6px;top:301.6px;font-size:4.7px;font-weight:bold;color:#2a2a2a;transform:scaleX(0.9332);transform-origin:0 0;">NIGHT 13</div>
<div class="a" style="left:49.6px;top:307.50000000000006px;width:114px;height:7px;overflow:hidden">
<div class="a" id="t91" style="left:0px;top:0px;font-size:5px;color:#777;transform:scaleX(0.9207);transform-origin:0 0;">New Order 2020/04/26 14:36:53 (Created by WBExt)</div>
</div>
<div class="a" id="t92" style="left:168px;top:301.20000000000005px;font-size:5px;font-weight:bold;color:#222;transform:scaleX(0.8868);transform-origin:0 0;">Network</div>
<div class="a" id="t93" style="left:168px;top:307.50000000000006px;font-size:5px;color:#888;transform:scaleX(0.9644);transform-origin:0 0;">Unity</div>
<div class="a" id="t94" style="left:211.8px;top:301.20000000000005px;font-size:5px;color:#222;transform:scaleX(0.9062);transform-origin:0 0;"><span style='color:#888'>App Id:</span> gameid</div>
<div class="a" id="t95" style="left:211.8px;top:307.50000000000006px;font-size:5px;color:#222;transform:scaleX(0.9041);transform-origin:0 0;"><span style='color:#888'>AdUnit Id:</span> placementid</div>
<div class="a" id="t96" style="left:329.5px;top:301.20000000000005px;font-size:5px;color:#333;transform:scaleX(1.0787);transform-origin:0 0;">All</div>
<div class="a" style="left:484.5px;top:301.20000000000005px;font-size:4.8px;color:#444">$</div>
<div class="a" style="left:499.3px;top:301.20000000000005px;font-size:4.8px;font-weight:bold;color:#222;letter-spacing:-0.2px">10</div>
<div class="a" style="left:520.6px;top:302.6px;width:3.1px;height:3.1px;background:#1f9e5a;border-radius:50%"></div>
<div class="a" id="t97" style="left:525.5px;top:301.20000000000005px;font-size:5.2px;color:#333;transform:scaleX(0.8795);transform-origin:0 0;">Running</div>
<div class="a" style="left:575.7px;top:300.50000000000006px;width:12px;height:7.8px;border:0.6px solid #bbb;border-bottom-color:#888;background:#fff;border-radius:0.6px"></div>
<div class="a" style="left:575.7px;top:302.6px;width:12px;text-align:center;font-size:4.2px;color:#333">10</div>
<div class="a" style="left:31.5px;top:316.50000000000006px;width:577.5px;height:19.600000000000023px;background:#fdfefe"></div>
<div class="a" style="left:36.3px;top:320.00000000000006px;width:4.1px;height:4.1px;border:0.6px solid #a0a0a0;border-radius:0.7px;background:#fff"></div>
<div class="a" id="t98" style="left:49.6px;top:321.20000000000005px;font-size:4.7px;font-weight:bold;color:#2a2a2a;transform:scaleX(0.9730);transform-origin:0 0;">NIGHT 2</div>
<div class="a" style="left:49.6px;top:327.1000000000001px;width:114px;height:7px;overflow:hidden">
<div class="a" id="t99" style="left:0px;top:0px;font-size:5px;color:#777;transform:scaleX(0.9275);transform-origin:0 0;">arondx7mn3443ee0411f5f8fe7aecao (Created by WBExt)</div>
</div>
<div class="a" id="t100" style="left:168px;top:320.80000000000007px;font-size:5px;font-weight:bold;color:#222;transform:scaleX(0.8868);transform-origin:0 0;">Network</div>
<div class="a" id="t101" style="left:168px;top:327.1000000000001px;font-size:5px;color:#888;transform:scaleX(0.9644);transform-origin:0 0;">Unity</div>
<div class="a" id="t102" style="left:211.8px;top:320.80000000000007px;font-size:5px;color:#222;transform:scaleX(0.9062);transform-origin:0 0;"><span style='color:#888'>App Id:</span> gameid</div>
<div class="a" id="t103" style="left:211.8px;top:327.1000000000001px;font-size:5px;color:#222;transform:scaleX(0.8349);transform-origin:0 0;"><span style='color:#888'>AdUnit Id:</span> placementcoo</div>
<div class="a" id="t104" style="left:329.5px;top:320.80000000000007px;font-size:5px;color:#333;transform:scaleX(1.0787);transform-origin:0 0;">All</div>
<div class="a" style="left:484.5px;top:320.80000000000007px;font-size:4.8px;color:#444">$</div>
<div class="a" style="left:499.3px;top:320.80000000000007px;font-size:4.8px;font-weight:bold;color:#222;letter-spacing:-0.2px">10</div>
<div class="a" style="left:520.6px;top:322.20000000000005px;width:3.1px;height:3.1px;background:#1f9e5a;border-radius:50%"></div>
<div class="a" id="t105" style="left:525.5px;top:320.80000000000007px;font-size:5.2px;color:#333;transform:scaleX(0.8795);transform-origin:0 0;">Running</div>
<div class="a" style="left:575.7px;top:320.1000000000001px;width:12px;height:7.8px;border:0.6px solid #bbb;border-bottom-color:#888;background:#fff;border-radius:0.6px"></div>
<div class="a" style="left:575.7px;top:322.20000000000005px;width:12px;text-align:center;font-size:4.2px;color:#333">10</div>
<div class="a" style="left:31.5px;top:336.1000000000001px;width:577.5px;height:19.600000000000023px;background:#fdfefe"></div>
<div class="a" style="left:36.3px;top:339.6000000000001px;width:4.1px;height:4.1px;border:0.6px solid #a0a0a0;border-radius:0.7px;background:#fff"></div>
<div class="a" id="t106" style="left:49.6px;top:340.80000000000007px;font-size:4.7px;font-weight:bold;color:#2a2a2a;transform:scaleX(0.9806);transform-origin:0 0;">NIGHT 12</div>
<div class="a" style="left:49.6px;top:346.7000000000001px;width:114px;height:7px;overflow:hidden">
<div class="a" id="t107" style="left:0px;top:0px;font-size:5px;color:#777;transform:scaleX(0.9285);transform-origin:0 0;">Demo Order 2020/10/04 27:31:48 (Created by WBExt)</div>
</div>
<div class="a" id="t108" style="left:168px;top:340.4000000000001px;font-size:5px;font-weight:bold;color:#222;transform:scaleX(0.8868);transform-origin:0 0;">Network</div>
<div class="a" id="t109" style="left:168px;top:346.7000000000001px;font-size:5px;color:#888;transform:scaleX(0.9644);transform-origin:0 0;">Unity</div>
<div class="a" id="t110" style="left:211.8px;top:340.4000000000001px;font-size:5px;color:#222;transform:scaleX(0.9062);transform-origin:0 0;"><span style='color:#888'>App Id:</span> gameid</div>
<div class="a" id="t111" style="left:211.8px;top:346.7000000000001px;font-size:5px;color:#222;transform:scaleX(0.8811);transform-origin:0 0;"><span style='color:#888'>AdUnit Id:</span> placementid3k</div>
<div class="a" id="t112" style="left:329.5px;top:340.4000000000001px;font-size:5px;color:#333;transform:scaleX(0.8992);transform-origin:0 0;">Include</div>
<div class="a" style="left:367.5px;top:339.4000000000001px;width:8px;height:6.2px;background:#fff;border-radius:0.5px"></div>
<div class="a" style="left:368.8px;top:340.9000000000001px;font-size:4.2px;color:#333">AE</div>
<div class="a" style="left:377.5px;top:339.4000000000001px;width:8px;height:6.2px;background:#fff;border-radius:0.5px"></div>
<div class="a" style="left:378.8px;top:340.9000000000001px;font-size:4.2px;color:#333">AL</div>
<div class="a" style="left:387.5px;top:339.4000000000001px;width:8px;height:6.2px;background:#fff;border-radius:0.5px"></div>
<div class="a" style="left:388.8px;top:340.9000000000001px;font-size:4.2px;color:#333">AR</div>
<div class="a" style="left:484.5px;top:340.4000000000001px;font-size:4.8px;color:#444">$</div>
<div class="a" style="left:499.3px;top:340.4000000000001px;font-size:4.8px;font-weight:bold;color:#222;letter-spacing:-0.2px">10</div>
<div class="a" style="left:520.6px;top:341.80000000000007px;width:3.1px;height:3.1px;background:#1f9e5a;border-radius:50%"></div>
<div class="a" id="t113" style="left:525.5px;top:340.4000000000001px;font-size:5.2px;color:#333;transform:scaleX(0.8795);transform-origin:0 0;">Running</div>
<div class="a" style="left:575.7px;top:339.7000000000001px;width:12px;height:7.8px;border:0.6px solid #bbb;border-bottom-color:#888;background:#fff;border-radius:0.6px"></div>
<div class="a" style="left:575.7px;top:341.80000000000007px;width:12px;text-align:center;font-size:4.2px;color:#333">10</div>
<div class="a" style="left:31.5px;top:355.7000000000001px;width:577.5px;height:19.600000000000023px;background:#fdfefe"></div>
<div class="a" style="left:36.3px;top:359.2000000000001px;width:4.1px;height:4.1px;border:0.6px solid #a0a0a0;border-radius:0.7px;background:#fff"></div>
<div class="a" id="t114" style="left:49.6px;top:360.4000000000001px;font-size:4.7px;font-weight:bold;color:#2a2a2a;transform:scaleX(0.9597);transform-origin:0 0;">Advisory Network (Duplicated)</div>
<div class="a" style="left:49.6px;top:366.3000000000001px;width:114px;height:7px;overflow:hidden">
<div class="a" id="t115" style="left:0px;top:0px;font-size:5px;color:#777;transform:scaleX(0.8601);transform-origin:0 0;">Broken Ads</div>
</div>
<div class="a" id="t116" style="left:168px;top:360.0000000000001px;font-size:5px;font-weight:bold;color:#222;transform:scaleX(0.8868);transform-origin:0 0;">Network</div>
<div class="a" id="t117" style="left:168px;top:366.3000000000001px;font-size:5px;color:#888;transform:scaleX(0.8761);transform-origin:0 0;">AdColony</div>
<div class="a" id="t118" style="left:211.8px;top:360.0000000000001px;font-size:5px;color:#222;transform:scaleX(0.9182);transform-origin:0 0;"><span style='color:#888'>App Id:</span> app</div>
<div class="a" id="t119" style="left:211.8px;top:366.3000000000001px;font-size:5px;color:#222;transform:scaleX(0.9157);transform-origin:0 0;"><span style='color:#888'>AdUnit Id:</span> id2</div>
<div class="a" id="t120" style="left:329.5px;top:360.0000000000001px;font-size:5px;color:#333;transform:scaleX(0.8992);transform-origin:0 0;">Include</div>
<div class="a" style="left:367.5px;top:359.0000000000001px;width:8px;height:6.2px;background:#fff;border-radius:0.5px"></div>
<div class="a" style="left:368.8px;top:360.5000000000001px;font-size:4.2px;color:#333">AD</div>
<div class="a" style="left:377.5px;top:359.0000000000001px;width:8px;height:6.2px;background:#fff;border-radius:0.5px"></div>
<div class="a" style="left:378.8px;top:360.5000000000001px;font-size:4.2px;color:#333">AL</div>
<div class="a" style="left:387.5px;top:359.0000000000001px;width:8px;height:6.2px;background:#fff;border-radius:0.5px"></div>
<div class="a" style="left:388.8px;top:360.5000000000001px;font-size:4.2px;color:#333">AO</div>
<div class="a" style="left:397.5px;top:359.0000000000001px;width:8px;height:6.2px;background:#fff;border-radius:0.5px"></div>
<div class="a" style="left:398.8px;top:360.5000000000001px;font-size:4.2px;color:#333">AS</div>
<div class="a" style="left:407.5px;top:359.0000000000001px;width:8px;height:6.2px;background:#fff;border-radius:0.5px"></div>
<div class="a" style="left:408.8px;top:360.5000000000001px;font-size:4.2px;color:#333">DE</div>
<div class="a" style="left:484.5px;top:360.0000000000001px;font-size:4.8px;color:#444">$</div>
<div class="a" style="left:499.3px;top:360.0000000000001px;font-size:4.8px;font-weight:bold;color:#222;letter-spacing:-0.2px">10</div>
<div class="a" style="left:520.6px;top:361.4000000000001px;width:3.1px;height:3.1px;background:#1f9e5a;border-radius:50%"></div>
<div class="a" id="t121" style="left:525.5px;top:360.0000000000001px;font-size:5.2px;color:#333;transform:scaleX(0.8795);transform-origin:0 0;">Running</div>
<div class="a" style="left:575.7px;top:359.3000000000001px;width:12px;height:7.8px;border:0.6px solid #bbb;border-bottom-color:#888;background:#fff;border-radius:0.6px"></div>
<div class="a" style="left:575.7px;top:361.4000000000001px;width:12px;text-align:center;font-size:4.2px;color:#333">10</div>
<div class="a" style="left:604.7px;top:207.5px;width:4px;height:26.2px;background:#a9a9a9;border-radius:0 0 1.5px 1.5px"></div>
</div>
<div class="a" style="left:20.5px;top:372px;width:598.3px;height:0.8px;background:#e4e4e4"></div>
</body></html>
